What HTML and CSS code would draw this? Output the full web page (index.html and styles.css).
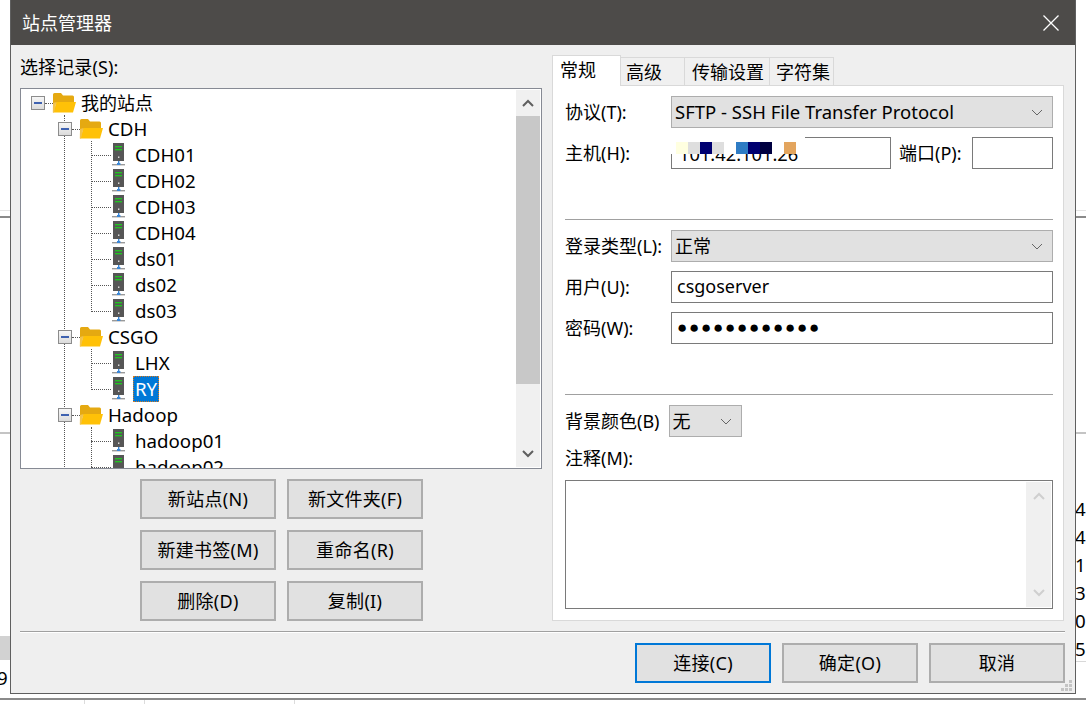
FILE: index.html
```
<!DOCTYPE html>
<html lang="zh-CN">
<head>
<meta charset="utf-8">
<title>站点管理器</title>
<link rel="stylesheet" href="styles.css">
</head>
<body>
<svg width="0" height="0" class="defs">
  <defs>
    <symbol id="folder" viewBox="0 0 24 22">
      <path d="M1 2.500Q1 1 2.500 1H9l2 2.500h9.500Q22 3.500 22 5v6H1Z" fill="#e5a911"/>
      <path d="M1 4v13h2Z" fill="#e5a911"/>
      <path d="M4.500 10H24l-3 10.500H1Z" fill="#ffc107"/>
      <path d="M1 11 .8 20.500H2L4.500 10Z" fill="#f2c24d"/>
    </symbol>
    <symbol id="server" viewBox="0 0 13 24">
      <rect x="1" y="0" width="11" height="18" fill="#565656"/>
      <rect x="3" y="3" width="7" height="1.400" fill="#22c322"/>
      <rect x="3" y="6" width="7" height="1.400" fill="#22c322"/>
      <rect x="6" y="13.500" width="1.400" height="1.400" fill="#e8e8e8"/>
      <rect x="6" y="18" width="1.400" height="3" fill="#3a87d8"/>
      <rect x="0" y="21" width="13" height="1.400" fill="#9a9a9a"/>
      <rect x="5" y="20" width="3.400" height="2" fill="#3a87d8"/>
    </symbol>
  </defs>
</svg>

<div class="backdrop">
  <div class="edge edge-top"></div>
  <div class="edge edge-a"></div>
  <div class="edge edge-b"></div>
  <div class="edge edge-c"></div>
  <div class="edge edge-d"></div>
  <div class="tick tick-1"></div>
  <div class="tick tick-2"></div>
  <div class="tick tick-3"></div>
  <div class="band"></div>
  <span class="bg-num num-9">9</span>
  <div class="bg-col">
    <span>40</span><span>40</span><span>1</span><span>32</span><span>0</span><span>58</span>
  </div>
</div>

<main class="dialog">
  <header class="titlebar">
    <h1 class="title">站点管理器</h1>
    <svg class="close" width="16" height="16" viewBox="0 0 16 16"><path d="M.5.5l15 15M15.500.5l-15 15" stroke="#fff" stroke-width="1.300" fill="none"/></svg>
  </header>

  <div class="client">
    <div class="columns">
      <section class="left">
        <div class="select-label">选择记录(S):</div>
        <div class="treebox">
          <div class="tree">
            <div class="guide g0"></div>
            <div class="guide g1a"></div>
            <div class="guide g1b"></div>
            <div class="guide g1c"></div>
            <div class="row l0"><span class="exp"></span><i class="dots"></i><svg class="ico-f"><use href="#folder"/></svg><span class="txt cjk">我的站点</span></div>
            <div class="row l1"><span class="exp"></span><i class="dots"></i><svg class="ico-f"><use href="#folder"/></svg><span class="txt">CDH</span></div>
            <div class="row l2"><i class="dots"></i><svg class="ico-s"><use href="#server"/></svg><span class="txt">CDH01</span></div>
            <div class="row l2"><i class="dots"></i><svg class="ico-s"><use href="#server"/></svg><span class="txt">CDH02</span></div>
            <div class="row l2"><i class="dots"></i><svg class="ico-s"><use href="#server"/></svg><span class="txt">CDH03</span></div>
            <div class="row l2"><i class="dots"></i><svg class="ico-s"><use href="#server"/></svg><span class="txt">CDH04</span></div>
            <div class="row l2"><i class="dots"></i><svg class="ico-s"><use href="#server"/></svg><span class="txt">ds01</span></div>
            <div class="row l2"><i class="dots"></i><svg class="ico-s"><use href="#server"/></svg><span class="txt">ds02</span></div>
            <div class="row l2"><i class="dots"></i><svg class="ico-s"><use href="#server"/></svg><span class="txt">ds03</span></div>
            <div class="row l1"><span class="exp"></span><i class="dots"></i><svg class="ico-f"><use href="#folder"/></svg><span class="txt">CSGO</span></div>
            <div class="row l2"><i class="dots"></i><svg class="ico-s"><use href="#server"/></svg><span class="txt">LHX</span></div>
            <div class="row l2"><i class="dots"></i><svg class="ico-s"><use href="#server"/></svg><span class="txt selected">RY</span></div>
            <div class="row l1"><span class="exp"></span><i class="dots"></i><svg class="ico-f"><use href="#folder"/></svg><span class="txt">Hadoop</span></div>
            <div class="row l2"><i class="dots"></i><svg class="ico-s"><use href="#server"/></svg><span class="txt">hadoop01</span></div>
            <div class="row l2"><i class="dots"></i><svg class="ico-s"><use href="#server"/></svg><span class="txt">hadoop02</span></div>
          </div>
          <div class="scrollbar">
            <span class="sb-btn"><svg width="12" height="8" viewBox="0 0 12 8"><path d="M1 7l5-5 5 5" stroke="#5f5f5f" stroke-width="2" fill="none"/></svg></span>
            <span class="sb-thumb"></span>
            <span class="sb-rest"></span>
            <span class="sb-btn"><svg width="12" height="8" viewBox="0 0 12 8"><path d="M1 1l5 5 5-5" stroke="#5f5f5f" stroke-width="2" fill="none"/></svg></span>
          </div>
        </div>
        <div class="site-buttons">
          <button class="btn">新站点(N)</button>
          <button class="btn">新文件夹(F)</button>
          <button class="btn">新建书签(M)</button>
          <button class="btn">重命名(R)</button>
          <button class="btn">删除(D)</button>
          <button class="btn">复制(I)</button>
        </div>
      </section>

      <section class="right">
        <div class="tabs">
          <span class="tab active">常规</span>
          <span class="tab t-adv">高级</span>
          <span class="tab t-trans">传输设置</span>
          <span class="tab t-char">字符集</span>
        </div>
        <div class="panel">
          <div class="field f-proto">
            <label class="lbl">协议(T):</label>
            <div class="combo grow"><span class="proto">SFTP - SSH File Transfer Protocol</span><svg class="chev" width="12" height="7" viewBox="0 0 12 7"><path d="M1 1l5 5 5-5" stroke="#666" fill="none"/></svg></div>
          </div>
          <div class="field f-host">
            <label class="lbl">主机(H):</label>
            <div class="input host">101.42.101.26
              <div class="mosaic">
                <b class="m-y"></b><b class="m-g"></b><b class="m-n"></b><b class="m-g"></b><b class="m-w"></b><b class="m-b"></b><b class="m-n"></b><b class="m-k"></b><b class="m-w"></b><b class="m-o"></b>
              </div>
            </div>
            <label class="lbl port-lbl">端口(P):</label>
            <div class="input port"></div>
          </div>
          <hr class="rule rule-1">
          <div class="field f-type">
            <label class="lbl">登录类型(L):</label>
            <div class="combo grow"><span>正常</span><svg class="chev" width="12" height="7" viewBox="0 0 12 7"><path d="M1 1l5 5 5-5" stroke="#666" fill="none"/></svg></div>
          </div>
          <div class="field f-user">
            <label class="lbl">用户(U):</label>
            <div class="input grow user">csgoserver</div>
          </div>
          <div class="field f-pass">
            <label class="lbl">密码(W):</label>
            <div class="input grow pw">●●●●●●●●●●●●</div>
          </div>
          <hr class="rule rule-2">
          <div class="f-color">
            <label class="lbl-auto">背景颜色(B)</label>
            <div class="combo color"><span>无</span><svg class="chev" width="12" height="7" viewBox="0 0 12 7"><path d="M1 1l5 5 5-5" stroke="#666" fill="none"/></svg></div>
          </div>
          <div class="note-label">注释(M):</div>
          <div class="note">
            <div class="note-sb">
              <svg width="12" height="8" viewBox="0 0 12 8"><path d="M1 7l5-5 5 5" stroke="#cfcfcf" stroke-width="2" fill="none"/></svg>
              <svg width="12" height="8" viewBox="0 0 12 8"><path d="M1 1l5 5 5-5" stroke="#cfcfcf" stroke-width="2" fill="none"/></svg>
            </div>
          </div>
        </div>
      </section>
    </div>

    <hr class="sep">
    <footer class="footer">
      <button class="btn primary">连接(C)</button>
      <button class="btn">确定(O)</button>
      <button class="btn">取消</button>
    </footer>
    <svg class="grip" width="12" height="12" viewBox="0 0 12 12"><path d="M8 0h3v3H8zM4 4h3v3H4zM8 4h3v3H8zM0 8h3v3H0zM4 8h3v3H4zM8 8h3v3H8z" fill="#c4c4c4"/></svg>
  </div>
</main>
</body>
</html>
```

FILE: styles.css
```
* { box-sizing: border-box; }
html, body { margin: 0; padding: 0; }
body {
  position: relative;
  width: 1086px;
  height: 704px;
  overflow: hidden;
  background: #fff;
  color: #000;
  font: 18px/26px "Noto Sans", "Noto Sans CJK SC", sans-serif;
}
.defs { position: absolute; }

/* what shows behind the dialog */
.backdrop { position: absolute; inset: 0; }
.edge { position: absolute; left: 0; right: 0; height: 2px; background: #8a8a8a; }
.edge-top { top: 210px; height: 1px; background: #e4e4e4; }
.edge-a { top: 216px; }
.edge-b { top: 432px; height: 2px; background: #c4c4c4; }
.edge-c { top: 698px; }
.edge-d { left: 1076px; top: 661px; height: 1px; background: #d8d8d8; }
.tick { position: absolute; top: 700px; width: 1px; height: 4px; background: #dcdcdc; }
.tick-1 { left: 84px; }
.tick-2 { left: 144px; }
.tick-3 { left: 294px; }
.band { position: absolute; left: 0; top: 636px; width: 10px; height: 24px; background: #d2d2d2; }
.bg-num { position: absolute; line-height: 26px; }
.num-9 { left: -3px; top: 665px; font-size: 18.700px; }
.bg-col { position: absolute; left: 1075px; top: 495px; display: flex; flex-direction: column; font-size: 18.700px; }
.bg-col span { height: 28px; line-height: 28px; white-space: nowrap; }

/* dialog window */
.dialog {
  position: absolute;
  left: 10px;
  top: 0;
  width: 1066px;
  height: 694px;
  border: 1px solid #5f5f5f;
  border-top: 0;
  display: flex;
  flex-direction: column;
  background: #efefef;
}
.titlebar {
  height: 45px;
  flex: none;
  background: #4d4b49;
  display: flex;
  align-items: center;
  justify-content: space-between;
  padding: 0 16px 0 11px;
}
.title { margin: 0; font-size: 18px; font-weight: 400; color: #fff; }
.close { flex: none; }
.client { position: relative; flex: 1; padding: 0 10px 0 9px; display: flex; flex-direction: column; }
.columns { display: flex; gap: 10px; height: 576px; flex: none; }

/* left column */
.left { width: 522px; flex: none; display: flex; flex-direction: column; }
.select-label { height: 43px; padding-top: 9px; letter-spacing: .1px; }
.treebox {
  height: 381px;
  border: 1px solid #868a94;
  background: #fff;
  display: flex;
  flex: none;
}
.tree { position: relative; flex: 1; overflow: hidden; padding-top: 1px; }
.row { position: relative; height: 26px; display: flex; align-items: center; white-space: nowrap; }
.l0 { padding-left: 10px; }
.l1 { padding-left: 37px; }
.l2 { padding-left: 91px; }
.exp {
  width: 14px; height: 14px; flex: none;
  border: 1px solid #8c8c8c;
  background: linear-gradient(#f6f6f6, #dcdcdc);
  position: relative;
}
.exp::after { content: ""; position: absolute; left: 2px; right: 2px; top: 5px; height: 2px; background: #3f62b0; }
.dots { position: absolute; top: 13px; height: 0; border-top: 1px dotted #555; }
.l0 .dots { left: 24px; width: 8px; }
.l1 .dots { left: 51px; width: 8px; }
.l2 .dots { left: 70px; width: 20px; }
.ico-f { width: 24px; height: 22px; flex: none; margin-left: 7px; }
.ico-s { width: 13px; height: 24px; flex: none; }
.txt { padding: 0 2px; margin-left: 3px; line-height: 26px; font-size: 18.700px; }
.cjk { font-size: 18px; }
.l2 .txt { margin-left: 8px; }
.selected {
  background: #0078d7;
  color: #fff;
  outline: 1px dotted #d87b1e;
  outline-offset: -1px;
}
.guide { position: absolute; width: 0; border-left: 1px dotted #555; }
.g0 { left: 43px; top: 26px; height: 360px; }
.g1a { left: 70px; top: 52px; height: 169px; }
.g1b { left: 70px; top: 260px; height: 39px; }
.g1c { left: 70px; top: 338px; height: 50px; }

.scrollbar { width: 24px; flex: none; background: #f0f0f0; margin: 1px; margin-left: 0; display: flex; flex-direction: column; }
.sb-btn { height: 26px; flex: none; display: flex; align-items: center; justify-content: center; }
.sb-thumb { height: 268px; flex: none; background: #c8c8c8; }
.sb-rest { flex: 1; }

.site-buttons {
  display: grid;
  grid-template-columns: 136px 136px;
  grid-auto-rows: 40px;
  gap: 11px;
  margin: 10px 0 0 120px;
}
.btn {
  margin: 0; padding: 0;
  border: 2px solid #adadad;
  background: #e1e1e1;
  color: #000;
  font: inherit;
  letter-spacing: .3px;
  width: 136px; height: 40px;
}
.primary { border-color: #0078d7; }

/* right column */
.right { width: 512px; flex: none; margin-top: 8px; display: flex; flex-direction: column; height: 568px; padding-top: 1px; }
.tabs { display: flex; height: 32px; align-items: flex-end; flex: none; position: relative; z-index: 1; margin-bottom: -1px; }
.tab {
  height: 29px;
  border: 1px solid #d9d9d9;
  border-left: 0;
  background: #f0f0f0;
  line-height: 29px;
  white-space: nowrap;
  text-align: left;
}
.tab.active { height: 31px; width: 69px; background: #fff; border-left: 1px solid #d9d9d9; border-bottom: 0; padding-left: 7px; }
.t-adv { width: 64px; padding-left: 5px; }
.t-trans { width: 85px; padding-left: 7px; }
.t-char { width: 64px; padding-left: 6px; }
.panel { flex: 1; background: #fff; border: 1px solid #d9d9d9; padding: 10px 10px 0 12px; display: flex; flex-direction: column; }
.field { display: flex; align-items: center; }
.lbl { width: 106px; flex: none; }
.lbl-auto { flex: none; }
.grow { flex: 1; min-width: 0; }
.combo {
  height: 32px;
  background: #e1e1e1;
  border: 1px solid #adadad;
  display: flex;
  align-items: center;
  justify-content: space-between;
  padding: 0 9px 0 3px;
}
.proto { font-size: 18.500px; }
.chev { flex: none; }
.input { position: relative; height: 32px; background: #fff; border: 1px solid #7a7a7a; padding: 0 5px; line-height: 30px; }
.user { line-height: 28px; }
.host { width: 220px; flex: none; padding-left: 7px; font-size: 18.300px; line-height: 31px; }
.mosaic { position: absolute; left: -1px; top: -1px; height: 17px; width: 134px; display: flex; background: #fff; }
.mosaic b { display: block; height: 12px; margin-top: 5px; width: 12px; flex: none; }
.m-y { background: #ffffe0; margin-left: 5px; }
.m-g { background: #dedede; }
.m-n { background: #000070; }
.m-w { background: #fff; }
.m-b { background: #2e7cc4; }
.m-k { background: #000040; }
.m-o { background: #e3a55e; }
.port-lbl { width: 73px; margin-left: 8px; }
.port { width: 81px; flex: none; }
.f-host { margin-top: 9px; }
.rule { width: 100%; margin: 0; border: 0; border-top: 1px solid #a0a0a0; border-bottom: 1px solid #fff; height: 2px; flex: none; }
.rule-1 { margin-top: 50px; }
.f-type { margin-top: 9px; }
.f-user { margin-top: 9px; }
.f-pass { margin-top: 9px; }
.pw { font-family: "Liberation Sans", sans-serif; font-size: 17px; letter-spacing: 1.730px; }
.rule-2 { margin-top: 50px; }
.f-color { display: flex; align-items: center; gap: 9px; margin-top: 9px; }
.color { width: 73px; height: 32px; padding-left: 3px; }
.note-label { margin-top: 8px; height: 26px; }
.note { margin-top: 9px; height: 129px; background: #fff; border: 1px solid #7a7a7a; display: flex; justify-content: flex-end; }
.note-sb { width: 25px; margin: 1px; background: #f0f0f0; display: flex; flex-direction: column; justify-content: space-between; align-items: center; padding: 10px 0; }

/* bottom */
.sep { width: 100%; margin: 10px 0 0; border: 0; border-top: 1px solid #a0a0a0; border-bottom: 1px solid #fff; height: 2px; flex: none; }
.footer { display: flex; justify-content: flex-end; gap: 11px; margin-top: 10px; }
.grip { position: absolute; right: 2px; bottom: 1px; }
```
